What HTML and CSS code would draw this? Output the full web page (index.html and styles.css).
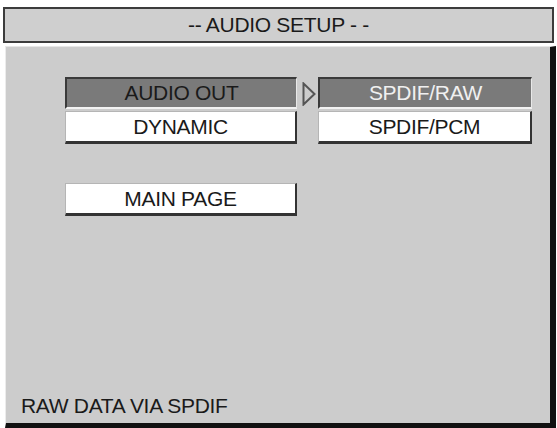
FILE: index.html
```html
<!DOCTYPE html>
<html lang="en">
<head>
    <meta charset="UTF-8">
    <meta name="viewport" content="width=device-width, initial-scale=1.0">
    <title>Audio Setup</title>
    <link rel="stylesheet" href="styles.css">
</head>
<body>
    <div class="title-bar">-- AUDIO SETUP - -</div>

    <div class="panel">
        <div class="menu">
            <div class="item active">AUDIO OUT</div>
            <div class="arrow">
                <svg width="14" height="24" viewBox="0 0 14 24">
                    <path d="M1.5 1.5 L12.5 12 L1.5 22.5 Z" fill="none" stroke="#555" stroke-width="2"/>
                </svg>
            </div>
            <div class="item active light">SPDIF/RAW</div>

            <div class="item">DYNAMIC</div>
            <div></div>
            <div class="item">SPDIF/PCM</div>
        </div>

        <div class="main-page">
            <div class="item">MAIN PAGE</div>
        </div>

        <div class="status">RAW DATA VIA SPDIF</div>
    </div>
</body>
</html>
```

FILE: styles.css
```css
html, body {
    overflow: hidden;
}
body {
    margin: 0;
    background: #fff;
    font-family: "Liberation Sans", Arial, sans-serif;
    font-size: 21px;
    letter-spacing: -0.3px;
    color: #1a1a1a;
}
.title-bar {
    box-sizing: border-box;
    margin: 7px 0 0 3px;
    width: 551px;
    height: 36px;
    background: #cfcfcf;
    border: 2px solid #3c3c3c;
    display: flex;
    align-items: center;
    justify-content: center;
    padding-bottom: 1px;
}
.panel {
    box-sizing: border-box;
    margin: 3px 0 0 5px;
    width: 551px;
    height: 382px;
    background: #cccccc;
    border-top: 1px solid #e6e6e6;
    border-left: 1px solid #ececec;
    border-right: 6px solid #111;
    border-bottom: 5px solid #111;
    display: flex;
    flex-direction: column;
    padding: 30px 0 0 59px;
}
.menu {
    display: grid;
    grid-template-columns: 232px 21px 214px;
    grid-auto-rows: 33px;
    row-gap: 1px;
}
.item {
    box-sizing: border-box;
    height: 33px;
    background: #fff;
    border-top: 1px solid #b5b5b5;
    border-left: 1px solid #b5b5b5;
    border-right: 2px solid #333;
    border-bottom: 3px solid #333;
    display: flex;
    align-items: center;
    justify-content: center;
}
.item.active {
    height: 32px;
    background: #7a7a7a;
    border-top: 2px solid #3a3a3a;
    border-left: 2px solid #3a3a3a;
    border-right: 1px solid #e8e8e8;
    border-bottom: 2px solid #f2f2f2;
}
.item.light {
    color: #f0f0f0;
}
.arrow {
    display: flex;
    align-items: center;
    padding-left: 5px;
}
.main-page {
    margin-top: 39px;
    width: 232px;
}
.status {
    margin: auto 0 0 -44px;
    padding-bottom: 5px;
}
```
